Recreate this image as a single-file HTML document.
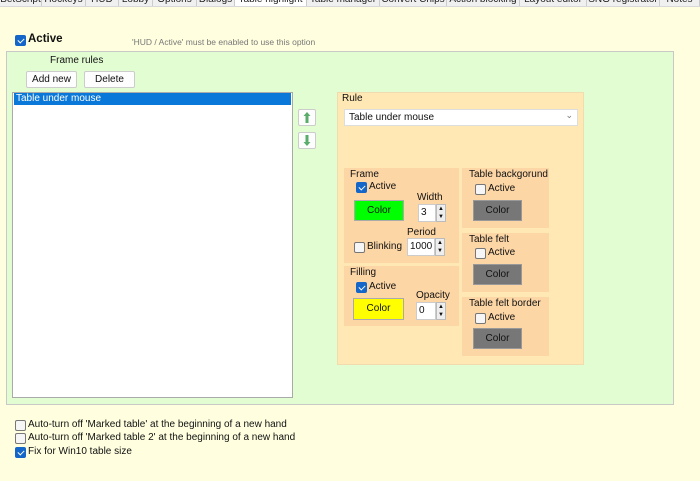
<!DOCTYPE html>
<html><head><meta charset="utf-8"><style>
*{box-sizing:border-box;margin:0;padding:0}
body{width:700px;height:481px;background:#ffffe0;font-family:"Liberation Sans",sans-serif;font-size:10px;color:#111;position:relative;overflow:hidden}
.a{position:absolute}
.tabs{left:0;top:0;width:700px;height:7px;background:#f0f0f0;border-bottom:1px solid #d8d8d8;overflow:hidden}
.tab{position:absolute;top:-6px;height:13px;font-size:10px;white-space:nowrap;text-align:center;border-right:1px solid #ccc;color:#222;overflow:hidden}
.cb{position:absolute;width:11px;height:11px;border:1px solid #777;border-radius:2px;background:#f6f6f6}
.cb.on{background:#1467c8;border-color:#1467c8}
.cb.on::after{content:"";position:absolute;left:3px;top:1px;width:3px;height:5px;border:solid #fff;border-width:0 1px 1px 0;transform:rotate(45deg)}
.btn{position:absolute;background:#fdfdfd;border:1px solid #ccc;border-radius:2px;text-align:center;line-height:15px}
.lab{position:absolute;white-space:nowrap}
.color{position:absolute;border:1px solid #aaa;text-align:center;line-height:19px}
.spin{position:absolute;height:18px;background:#fff;border:1px solid #ccc;padding-left:2px;line-height:16px}
.sb{position:absolute;width:10px;height:18px;background:#eee;border:1px solid #bbb;font-size:6px;line-height:8px;text-align:center}
</style></head><body>
<div class="a tabs">
<div class="tab" style="left:0;width:42px">BetScript</div>
<div class="tab" style="left:42px;width:44px">Hockeys</div>
<div class="tab" style="left:86px;width:33px">HUD</div>
<div class="tab" style="left:119px;width:34px">Lobby</div>
<div class="tab" style="left:153px;width:44px">Options</div>
<div class="tab" style="left:197px;width:38px">Dialogs</div>
<div class="tab" style="left:235px;width:72px;background:#fff">Table highlight</div>
<div class="tab" style="left:307px;width:73px">Table manager</div>
<div class="tab" style="left:380px;width:67px">Convert Chips</div>
<div class="tab" style="left:447px;width:73px">Action blocking</div>
<div class="tab" style="left:520px;width:67px">Layout editor</div>
<div class="tab" style="left:587px;width:73px">SNG registrator</div>
<div class="tab" style="left:660px;width:40px">Notes</div>
</div>

<div class="cb on" style="left:15px;top:35px"></div>
<div class="lab" style="left:28px;top:33px;font-weight:bold;font-size:11.5px">Active</div>
<div class="lab" style="left:132px;top:37px;font-size:8.5px;color:#777">'HUD / Active' must be enabled to use this option</div>

<div class="a" style="left:6px;top:51px;width:668px;height:354px;background:#e3fdd3;border:1px solid #c8c8c8"></div>
<div class="lab" style="left:50px;top:55px">Frame rules</div>
<div class="btn" style="left:26px;top:71px;width:51px;height:17px">Add new</div>
<div class="btn" style="left:84px;top:71px;width:51px;height:17px">Delete</div>
<div class="a" style="left:12px;top:92px;width:281px;height:306px;background:#fff;border:1px solid #aaa"></div>
<div class="a" style="left:14px;top:93px;width:277px;height:12px;background:#0a78d8;color:#fff;line-height:12px;padding-left:2px">Table under mouse</div>

<div class="btn" style="left:298px;top:109px;width:18px;height:17px"><svg width="16" height="15" viewBox="0 0 16 15"><path d="M8 2 L11.5 6 H9.5 V13 H6.5 V6 H4.5 Z" fill="#5aac6a"/></svg></div>
<div class="btn" style="left:298px;top:132px;width:18px;height:17px"><svg width="16" height="15" viewBox="0 0 16 15"><path d="M8 13 L11.5 9 H9.5 V2 H6.5 V9 H4.5 Z" fill="#5aac6a"/></svg></div>

<div class="a" style="left:337px;top:92px;width:247px;height:273px;background:#ffe8b3;border:1px solid #f0dcae"></div>
<div class="lab" style="left:342px;top:93px">Rule</div>
<div class="a" style="left:344px;top:109px;width:234px;height:17px;background:#fff;border:1px solid #ddd;line-height:15px;padding-left:4px">Table under mouse<span style="position:absolute;right:4px;top:-2px;color:#777;font-size:9px">&#8964;</span></div>

<div class="a" style="left:344px;top:168px;width:115px;height:95px;background:#fdd6a6"></div>
<div class="lab" style="left:350px;top:169px">Frame</div>
<div class="cb on" style="left:356px;top:182px"></div>
<div class="lab" style="left:369px;top:181px">Active</div>
<div class="color" style="left:354px;top:200px;width:50px;height:21px;background:#00ff00">Color</div>
<div class="lab" style="left:417px;top:192px">Width</div>
<div class="spin" style="left:418px;top:204px;width:18px">3</div>
<div class="sb" style="left:436px;top:204px">▲<br>▼</div>
<div class="lab" style="left:407px;top:227px">Period</div>
<div class="cb" style="left:354px;top:242px"></div>
<div class="lab" style="left:367px;top:241px">Blinking</div>
<div class="spin" style="left:407px;top:238px;width:28px">1000</div>
<div class="sb" style="left:435px;top:238px">▲<br>▼</div>

<div class="a" style="left:344px;top:266px;width:115px;height:60px;background:#fdd6a6"></div>
<div class="lab" style="left:350px;top:267px">Filling</div>
<div class="cb on" style="left:356px;top:282px"></div>
<div class="lab" style="left:369px;top:281px">Active</div>
<div class="color" style="left:353px;top:298px;width:51px;height:22px;background:#ffff00">Color</div>
<div class="lab" style="left:416px;top:290px">Opacity</div>
<div class="spin" style="left:416px;top:302px;width:20px">0</div>
<div class="sb" style="left:436px;top:302px">▲<br>▼</div>

<div class="a" style="left:462px;top:168px;width:87px;height:60px;background:#fdd6a6"></div>
<div class="lab" style="left:469px;top:169px">Table backgorund</div>
<div class="cb" style="left:475px;top:184px"></div>
<div class="lab" style="left:488px;top:183px">Active</div>
<div class="color" style="left:473px;top:200px;width:49px;height:21px;background:#777;border-color:#999">Color</div>

<div class="a" style="left:462px;top:233px;width:87px;height:59px;background:#fdd6a6"></div>
<div class="lab" style="left:469px;top:234px">Table felt</div>
<div class="cb" style="left:475px;top:248px"></div>
<div class="lab" style="left:488px;top:247px">Active</div>
<div class="color" style="left:473px;top:264px;width:49px;height:21px;background:#777;border-color:#999">Color</div>

<div class="a" style="left:462px;top:297px;width:87px;height:59px;background:#fdd6a6"></div>
<div class="lab" style="left:469px;top:298px">Table felt border</div>
<div class="cb" style="left:475px;top:313px"></div>
<div class="lab" style="left:488px;top:312px">Active</div>
<div class="color" style="left:473px;top:328px;width:49px;height:21px;background:#777;border-color:#999">Color</div>

<div class="cb" style="left:15px;top:420px"></div>
<div class="lab" style="left:28px;top:419px">Auto-turn off 'Marked table' at the beginning of a new hand</div>
<div class="cb" style="left:15px;top:433px"></div>
<div class="lab" style="left:28px;top:432px">Auto-turn off 'Marked table 2' at the beginning of a new hand</div>
<div class="cb on" style="left:15px;top:447px"></div>
<div class="lab" style="left:28px;top:446px">Fix for Win10 table size</div>
</body></html>
